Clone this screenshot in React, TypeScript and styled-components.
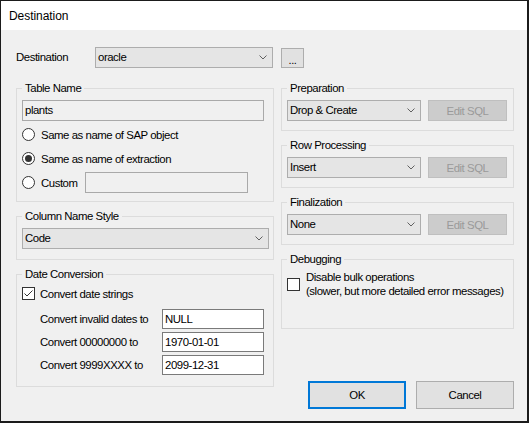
import styled, { createGlobalStyle } from "styled-components";

const GlobalStyle = createGlobalStyle`
  html, body {
    margin: 0;
    padding: 0;
    background: #ffffff;
  }
  body {
    font-family: "Liberation Sans", Arial, sans-serif;
    font-size: 11.4px;
    letter-spacing: -0.45px;
    color: #000000;
    white-space: nowrap;
  }
  * {
    box-sizing: border-box;
  }
`;

const Window = styled.div`
  width: 529px;
  height: 423px;
  border-style: solid;
  border-color: #1b1b1b;
  border-width: 1px 2px 2px 1px;
  background: #f0f0f0;
  display: flex;
  flex-direction: column;
`;

const TitleBar = styled.div`
  height: 29px;
  background: #ffffff;
  display: flex;
  align-items: center;
  padding-left: 8px;
  font-size: 12px;
  letter-spacing: -0.05px;
`;

const Body = styled.div`
  padding: 17px 13px 0 15px;
`;

const DestRow = styled.div`
  display: flex;
  align-items: flex-start;
  height: 22px;
  margin-bottom: 12px;
`;

const RowLabel = styled.div`
  width: 79px;
  line-height: 21px;
`;

const ComboBox = styled.div<{ $width: number }>`
  width: ${(p) => p.$width}px;
  height: 21px;
  flex-shrink: 0;
  border: 1px solid #adadad;
  background: #e5e5e5;
  display: flex;
  align-items: center;
  justify-content: space-between;
  padding: 0 5px 0 2px;
  line-height: 19px;
`;

const BrowseButton = styled.div`
  width: 23px;
  height: 20px;
  margin: 1px 0 0 8px;
  border: 1px solid #adadad;
  background: #e1e1e1;
  display: flex;
  align-items: center;
  justify-content: center;
  padding-top: 3px;
  font-size: 11px;
`;

const Columns = styled.div`
  display: grid;
  grid-template-columns: 258px 233px;
  column-gap: 7px;
  align-items: start;
`;

const Column = styled.div`
  display: flex;
  flex-direction: column;
  gap: 7px;
`;

const Group = styled.fieldset<{ $pt?: number; $pb?: number; $height?: number }>`
  margin: 0;
  min-width: 0;
  border: 1px solid #dcdcdc;
  padding: ${(p) => p.$pt ?? 5}px 6px ${(p) => p.$pb ?? 9}px 5px;
  ${(p) => (p.$height ? `height: ${p.$height}px;` : "")}
`;

const Caption = styled.legend`
  padding: 0 3px;
  margin: 0;
  line-height: 14px;
  font-size: 11.4px;
`;

const Stack = styled.div<{ $gap: number }>`
  display: flex;
  flex-direction: column;
  gap: ${(p) => p.$gap}px;
`;

const TextBox = styled.div<{ $width: number; $height?: number; $white?: boolean }>`
  width: ${(p) => p.$width}px;
  height: ${(p) => p.$height ?? 21}px;
  line-height: ${(p) => (p.$height ?? 21) - 2}px;
  flex-shrink: 0;
  border: 1px solid ${(p) => (p.$white ? "#7a7a7a" : "#a9a9a9")};
  background: ${(p) => (p.$white ? "#ffffff" : "#f0f0f0")};
  padding: 0 2px;
`;

const OptionRow = styled.div`
  display: flex;
  align-items: center;
  height: 21px;
`;

const RadioDot = styled.span<{ $checked?: boolean }>`
  width: 13px;
  height: 13px;
  flex-shrink: 0;
  border-radius: 50%;
  border: 1px solid #333333;
  background: #ffffff;
  display: flex;
  align-items: center;
  justify-content: center;
  &::after {
    content: "";
    width: 7px;
    height: 7px;
    border-radius: 50%;
    background: ${(p) => (p.$checked ? "#333333" : "transparent")};
  }
`;

const OptionLabel = styled.span<{ $width?: number }>`
  margin-left: 6px;
  ${(p) => (p.$width ? `width: ${p.$width}px;` : "")}
`;

const CheckRow = styled.div`
  display: flex;
  align-items: center;
  height: 15px;
`;

const CheckLabel = styled.span`
  margin-left: 5px;
`;

const DateRows = styled.div`
  display: flex;
  flex-direction: column;
  gap: 3px;
  margin-top: 8px;
  padding-left: 18px;
`;

const DateRow = styled.div`
  display: flex;
  align-items: center;
  height: 20px;
`;

const DateLabel = styled.span`
  width: 122px;
`;

const ActionRow = styled.div`
  display: flex;
  gap: 7px;
`;

const EditSqlButton = styled.div`
  width: 79px;
  height: 21px;
  border: 1px solid #bfbfbf;
  background: #cccccc;
  color: #9a9a9a;
  display: flex;
  align-items: center;
  justify-content: center;
`;

const DebugRow = styled.div`
  display: flex;
  align-items: flex-start;
`;

const DebugBox = styled.span`
  margin-top: 8px;
  display: flex;
`;

const DebugText = styled.div`
  margin-left: 6px;
  line-height: 14px;
  white-space: nowrap;
`;

const Footer = styled.div`
  display: flex;
  justify-content: flex-end;
  gap: 10px;
  margin-top: 45px;
`;

const DialogButton = styled.div<{ $primary?: boolean }>`
  width: 98px;
  height: 28px;
  border: ${(p) => (p.$primary ? "2px solid #0078d7" : "1px solid #adadad")};
  background: #e1e1e1;
  display: flex;
  align-items: center;
  justify-content: center;
`;

function Chevron() {
  return (
    <svg width="8" height="5" viewBox="0 0 8 5">
      <path d="M0.5 0.5 L4 4 L7.5 0.5" fill="none" stroke="#606060" strokeWidth="1" />
    </svg>
  );
}

function CheckBox({ checked }: { checked?: boolean }) {
  return (
    <svg width="13" height="13" viewBox="0 0 13 13" style={{ flexShrink: 0 }}>
      <rect x="0.5" y="0.5" width="12" height="12" fill="#ffffff" stroke="#333333" />
      {checked && (
        <path d="M2.5 6.5 L5 9 L10.5 3.5" fill="none" stroke="#333333" strokeWidth="1" />
      )}
    </svg>
  );
}

function Combo({ width, value }: { width: number; value: string }) {
  return (
    <ComboBox $width={width}>
      <span>{value}</span>
      <Chevron />
    </ComboBox>
  );
}

const sqlSteps = [
  { title: "Preparation", value: "Drop & Create" },
  { title: "Row Processing", value: "Insert" },
  { title: "Finalization", value: "None" },
];

const dateRules = [
  { label: "Convert invalid dates to", value: "NULL" },
  { label: "Convert 00000000 to", value: "1970-01-01" },
  { label: "Convert 9999XXXX to", value: "2099-12-31" },
];

export default function App() {
  return (
    <>
      <GlobalStyle />
      <Window>
        <TitleBar>Destination</TitleBar>
        <Body>
          <DestRow>
            <RowLabel>Destination</RowLabel>
            <Combo width={178} value="oracle" />
            <BrowseButton>...</BrowseButton>
          </DestRow>

          <Columns>
            <Column>
              <Group $pb={8}>
                <Caption>Table Name</Caption>
                <Stack $gap={3}>
                  <TextBox $width={242}>plants</TextBox>
                  <OptionRow>
                    <RadioDot />
                    <OptionLabel>Same as name of SAP object</OptionLabel>
                  </OptionRow>
                  <OptionRow>
                    <RadioDot $checked />
                    <OptionLabel>Same as name of extraction</OptionLabel>
                  </OptionRow>
                  <OptionRow>
                    <RadioDot />
                    <OptionLabel $width={44}>Custom</OptionLabel>
                    <TextBox $width={163} />
                  </OptionRow>
                </Stack>
              </Group>

              <Group $pb={10}>
                <Caption>Column Name Style</Caption>
                <Combo width={247} value="Code" />
              </Group>

              <Group $pb={11}>
                <Caption>Date Conversion</Caption>
                <CheckRow>
                  <CheckBox checked />
                  <CheckLabel>Convert date strings</CheckLabel>
                </CheckRow>
                <DateRows>
                  {dateRules.map((rule) => (
                    <DateRow key={rule.label}>
                      <DateLabel>{rule.label}</DateLabel>
                      <TextBox $white $width={102} $height={20}>
                        {rule.value}
                      </TextBox>
                    </DateRow>
                  ))}
                </DateRows>
              </Group>
            </Column>

            <Column>
              {sqlSteps.map((step) => (
                <Group key={step.title}>
                  <Caption>{step.title}</Caption>
                  <ActionRow>
                    <Combo width={134} value={step.value} />
                    <EditSqlButton>Edit SQL</EditSqlButton>
                  </ActionRow>
                </Group>
              ))}

              <Group $pt={4} $height={77}>
                <Caption>Debugging</Caption>
                <DebugRow>
                  <DebugBox>
                    <CheckBox />
                  </DebugBox>
                  <DebugText>
                    Disable bulk operations
                    <br />
                    (slower, but more detailed error messages)
                  </DebugText>
                </DebugRow>
              </Group>

              <Footer>
                <DialogButton $primary>OK</DialogButton>
                <DialogButton>Cancel</DialogButton>
              </Footer>
            </Column>
          </Columns>
        </Body>
      </Window>
    </>
  );
}
